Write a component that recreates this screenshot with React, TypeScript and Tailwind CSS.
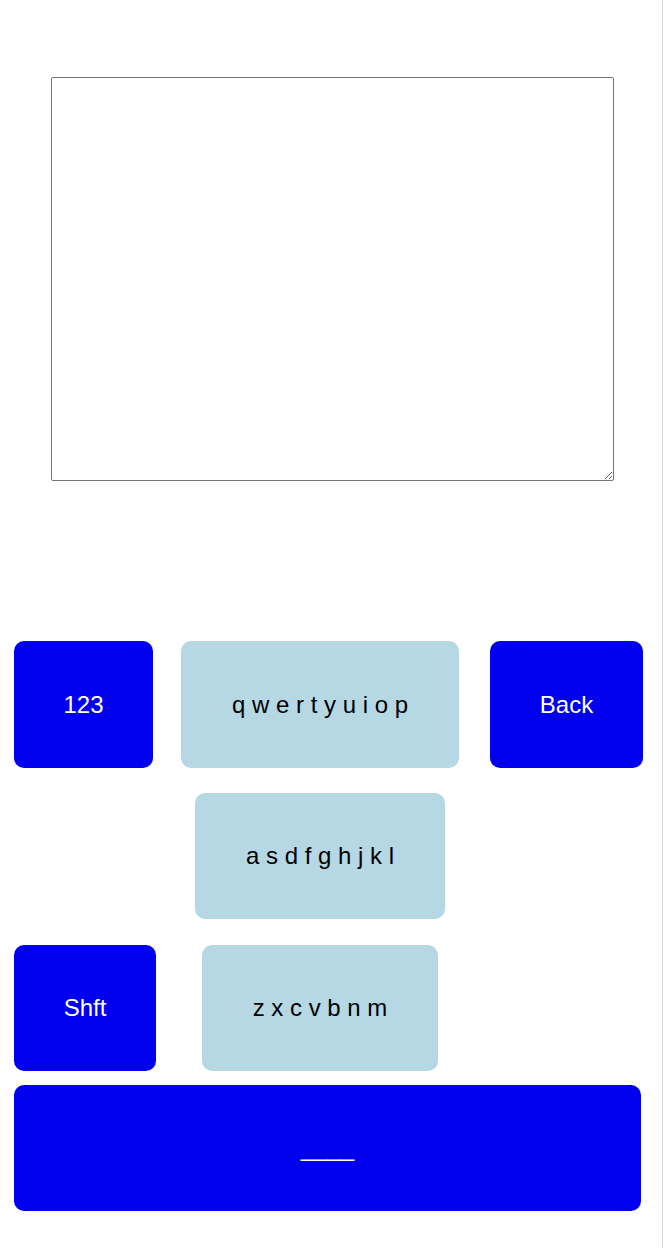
import React from "react";

export default function App() {
  const font = { fontFamily: '"Liberation Sans", Arial, sans-serif' };
  const blue = "bg-[#0000ee] text-white";
  const light = "bg-[#b6d8e4] text-black";
  const key = "flex items-center justify-center rounded-[10px] text-[24px]";
  return (
    <div className="w-[663px] h-[1248px] border-r border-[#d6d6d6] bg-white" style={font}>
      <div className="pt-[77px] pl-[51px]">
        <textarea className="block w-[563px] h-[404px] border border-[#767676] rounded-[2px] bg-white resize" />
      </div>
      <div className="mt-[160px] flex pl-[14px]">
        <div className={`${key} ${blue} w-[139px] h-[127px]`}>123</div>
        <div className={`${key} ${light} w-[278px] h-[127px] ml-[28px]`}>q w e r t y u i o p</div>
        <div className={`${key} ${blue} w-[153px] h-[127px] ml-[31px]`}>Back</div>
      </div>
      <div className="mt-[25px] flex pl-[195px]">
        <div className={`${key} ${light} w-[250px] h-[126px]`}>a s d f g h j k l</div>
      </div>
      <div className="mt-[26px] flex pl-[14px]">
        <div className={`${key} ${blue} w-[142px] h-[126px]`}>Shft</div>
        <div className={`${key} ${light} w-[236px] h-[126px] ml-[46px]`}>z x c v b n m</div>
      </div>
      <div className="mt-[14px] flex pl-[14px]">
        <div className={`${key} ${blue} w-[627px] h-[126px]`}>____</div>
      </div>
    </div>
  );
}
